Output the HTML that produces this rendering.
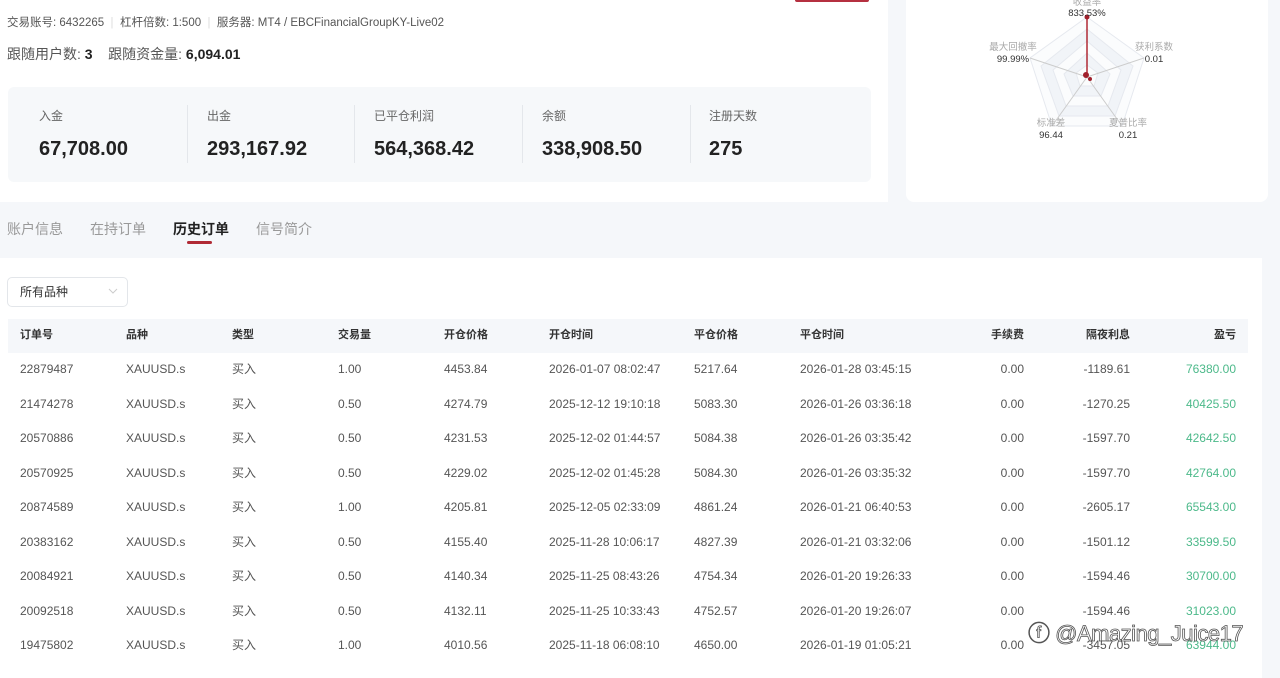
<!DOCTYPE html>
<html><head><meta charset="utf-8"><style>
*{margin:0;padding:0;box-sizing:border-box}
body{width:1280px;height:674px;overflow:hidden;background:#f5f7fa;font-family:"Liberation Sans","Noto Sans CJK SC",sans-serif;color:#333;position:relative}
.a{position:absolute;white-space:nowrap;line-height:1.2}
.card1{position:absolute;left:0;top:0;width:888px;height:202px;background:#fff}
.card2{position:absolute;left:906px;top:0;width:362px;height:202px;background:#fff;border-radius:0 0 8px 8px}
.stats{position:absolute;left:8px;top:87px;width:863px;height:95px;background:#f6f8fa;border-radius:6px}
.sep{position:absolute;top:105px;width:1px;height:58px;background:#e4e7eb}
.lab{font-size:12px;color:#666}
.big{font-size:20px;font-weight:bold;color:#222}
.tabs{font-size:14px;color:#999}
.tbl{position:absolute;left:0;top:258px;width:1262px;height:420px;background:#fff}
.hd{position:absolute;left:8px;top:319px;width:1240px;height:34px;background:#f5f7fa}
.th{font-size:11px;font-weight:bold;color:#333;height:14px;line-height:14px}
.td{font-size:12px;color:#555;height:14px;line-height:14px}
.g{color:#4cb98a}
</style></head><body>
<div class="card1"></div>
<div class="a" style="left:795px;top:0;width:74px;height:2px;background:#b53040;border-radius:0 0 2px 2px"></div>
<div class="a lab" style="left:7px;top:17px;font-size:11.5px;color:#555">交易账号: 6432265 <span style="color:#ddd">&nbsp;|&nbsp;</span> 杠杆倍数: 1:500 <span style="color:#ddd">&nbsp;|&nbsp;</span> 服务器: MT4 / EBCFinancialGroupKY-Live02</div>
<div class="a" style="left:7px;top:46px;font-size:14px;color:#555">跟随用户数: <b style="color:#222">3</b>&nbsp;&nbsp;&nbsp;&nbsp;跟随资金量: <b style="color:#222">6,094.01</b></div>
<div class="stats"></div>
<div class="sep" style="left:187px"></div><div class="sep" style="left:354px"></div><div class="sep" style="left:522px"></div><div class="sep" style="left:690px"></div>
<div class="a lab" style="left:39px;top:109px">入金</div><div class="a big" style="left:39px;top:137px">67,708.00</div>
<div class="a lab" style="left:207px;top:109px">出金</div><div class="a big" style="left:207px;top:137px">293,167.92</div>
<div class="a lab" style="left:374px;top:109px">已平仓利润</div><div class="a big" style="left:374px;top:137px">564,368.42</div>
<div class="a lab" style="left:542px;top:109px">余额</div><div class="a big" style="left:542px;top:137px">338,908.50</div>
<div class="a lab" style="left:709px;top:109px">注册天数</div><div class="a big" style="left:709px;top:137px">275</div>
<div class="card2"></div>
<svg class="a" style="left:906px;top:0" width="362" height="202">
<g fill="none" stroke="#e6e9ef" stroke-width="1">
<polygon points="181,17 238,58 216,126 146,126 124,58" fill="#fbfcfd"/>
<polygon points="181,29 227,66 209,116 153,116 135,66" fill="#f1f4f8"/>
<polygon points="181,41 215,70 202,106 160,106 147,70" fill="#fbfcfd"/>
<polygon points="181,53 204,74 195,96 167,96 158,74" fill="#f1f4f8"/>
<polygon points="181,65 192,73 188,86 174,86 170,73" fill="#fbfcfd"/>
</g>
<g stroke="#ccc"><line x1="181" y1="77" x2="238" y2="58"/><line x1="181" y1="77" x2="216" y2="126"/><line x1="181" y1="77" x2="146" y2="126"/><line x1="181" y1="77" x2="124" y2="58"/></g>
<line x1="181" y1="77" x2="181" y2="17" stroke="#b02a35" stroke-width="1.5"/>
<circle cx="181" cy="17" r="2.5" fill="#a0202c"/><circle cx="180" cy="75" r="3" fill="#a0202c"/><circle cx="184" cy="79" r="2" fill="#a0202c"/>
<g font-size="9.5" text-anchor="middle" font-family="Liberation Sans,Noto Sans CJK SC,sans-serif">
<text x="181" y="5" fill="#aaa">收益率</text><text x="181" y="16" fill="#333">833.53%</text>
<text x="248" y="50" fill="#aaa">获利系数</text><text x="248" y="62" fill="#333">0.01</text>
<text x="107" y="50" fill="#aaa">最大回撤率</text><text x="107" y="62" fill="#333">99.99%</text>
<text x="145" y="126" fill="#aaa">标准差</text><text x="145" y="138" fill="#333">96.44</text>
<text x="222" y="126" fill="#aaa">夏普比率</text><text x="222" y="138" fill="#333">0.21</text>
</g></svg>
<div class="a tabs" style="left:7px;top:221px">账户信息</div>
<div class="a tabs" style="left:90px;top:221px">在持订单</div>
<div class="a tabs" style="left:173px;top:221px;color:#222;font-weight:bold">历史订单</div>
<div class="a" style="left:187px;top:241px;width:25px;height:3px;background:#b02a35;border-radius:2px"></div>
<div class="a tabs" style="left:256px;top:221px">信号简介</div>
<div class="tbl"></div>
<div class="a" style="left:7px;top:277px;width:121px;height:30px;border:1px solid #e3e6ea;border-radius:5px;background:#fff"></div>
<div class="a" style="left:20px;top:285px;font-size:12px;color:#333">所有品种</div>
<svg class="a" style="left:108px;top:287px" width="10" height="8"><polyline points="1,2 5,6 9,2" fill="none" stroke="#ccc"/></svg>
<div class="hd"></div>
<div class="a th" style="left:20px;top:328px">订单号</div><div class="a th" style="left:126px;top:328px">品种</div><div class="a th" style="left:232px;top:328px">类型</div><div class="a th" style="left:338px;top:328px">交易量</div><div class="a th" style="left:444px;top:328px">开仓价格</div><div class="a th" style="left:549px;top:328px">开仓时间</div><div class="a th" style="left:694px;top:328px">平仓价格</div><div class="a th" style="left:800px;top:328px">平仓时间</div>
<div class="a th" style="right:256px;top:328px">手续费</div><div class="a th" style="right:150px;top:328px">隔夜利息</div><div class="a th" style="right:44px;top:328px">盈亏</div>
<div id="rows"></div>
<div class="a" style="left:1028px;top:621px;font-size:22px;letter-spacing:-0.5px;color:rgba(255,255,255,0.85);-webkit-text-stroke:0.8px #555;font-family:'Liberation Sans',sans-serif">ⓕ @Amazing_Juice17</div>
<script>
var d=[["22879487","1.00","4453.84","2026-01-07 08:02:47","5217.64","2026-01-28 03:45:15","-1189.61","76380.00"],
["21474278","0.50","4274.79","2025-12-12 19:10:18","5083.30","2026-01-26 03:36:18","-1270.25","40425.50"],
["20570886","0.50","4231.53","2025-12-02 01:44:57","5084.38","2026-01-26 03:35:42","-1597.70","42642.50"],
["20570925","0.50","4229.02","2025-12-02 01:45:28","5084.30","2026-01-26 03:35:32","-1597.70","42764.00"],
["20874589","1.00","4205.81","2025-12-05 02:33:09","4861.24","2026-01-21 06:40:53","-2605.17","65543.00"],
["20383162","0.50","4155.40","2025-11-28 10:06:17","4827.39","2026-01-21 03:32:06","-1501.12","33599.50"],
["20084921","0.50","4140.34","2025-11-25 08:43:26","4754.34","2026-01-20 19:26:33","-1594.46","30700.00"],
["20092518","0.50","4132.11","2025-11-25 10:33:43","4752.57","2026-01-20 19:26:07","-1594.46","31023.00"],
["19475802","1.00","4010.56","2025-11-18 06:08:10","4650.00","2026-01-19 01:05:21","-3457.05","63944.00"]];
var h="";d.forEach(function(r,i){var t=362+i*34.5;
h+='<div class="a td" style="left:20px;top:'+t+'px">'+r[0]+'</div><div class="a td" style="left:126px;top:'+t+'px">XAUUSD.s</div><div class="a td" style="left:232px;top:'+t+'px">买入</div><div class="a td" style="left:338px;top:'+t+'px">'+r[1]+'</div><div class="a td" style="left:444px;top:'+t+'px">'+r[2]+'</div><div class="a td" style="left:549px;top:'+t+'px">'+r[3]+'</div><div class="a td" style="left:694px;top:'+t+'px">'+r[4]+'</div><div class="a td" style="left:800px;top:'+t+'px">'+r[5]+'</div><div class="a td" style="right:256px;top:'+t+'px">0.00</div><div class="a td" style="right:150px;top:'+t+'px">'+r[6]+'</div><div class="a td g" style="right:44px;top:'+t+'px">'+r[7]+'</div>';});
document.getElementById("rows").innerHTML=h;
</script>
</body></html>
